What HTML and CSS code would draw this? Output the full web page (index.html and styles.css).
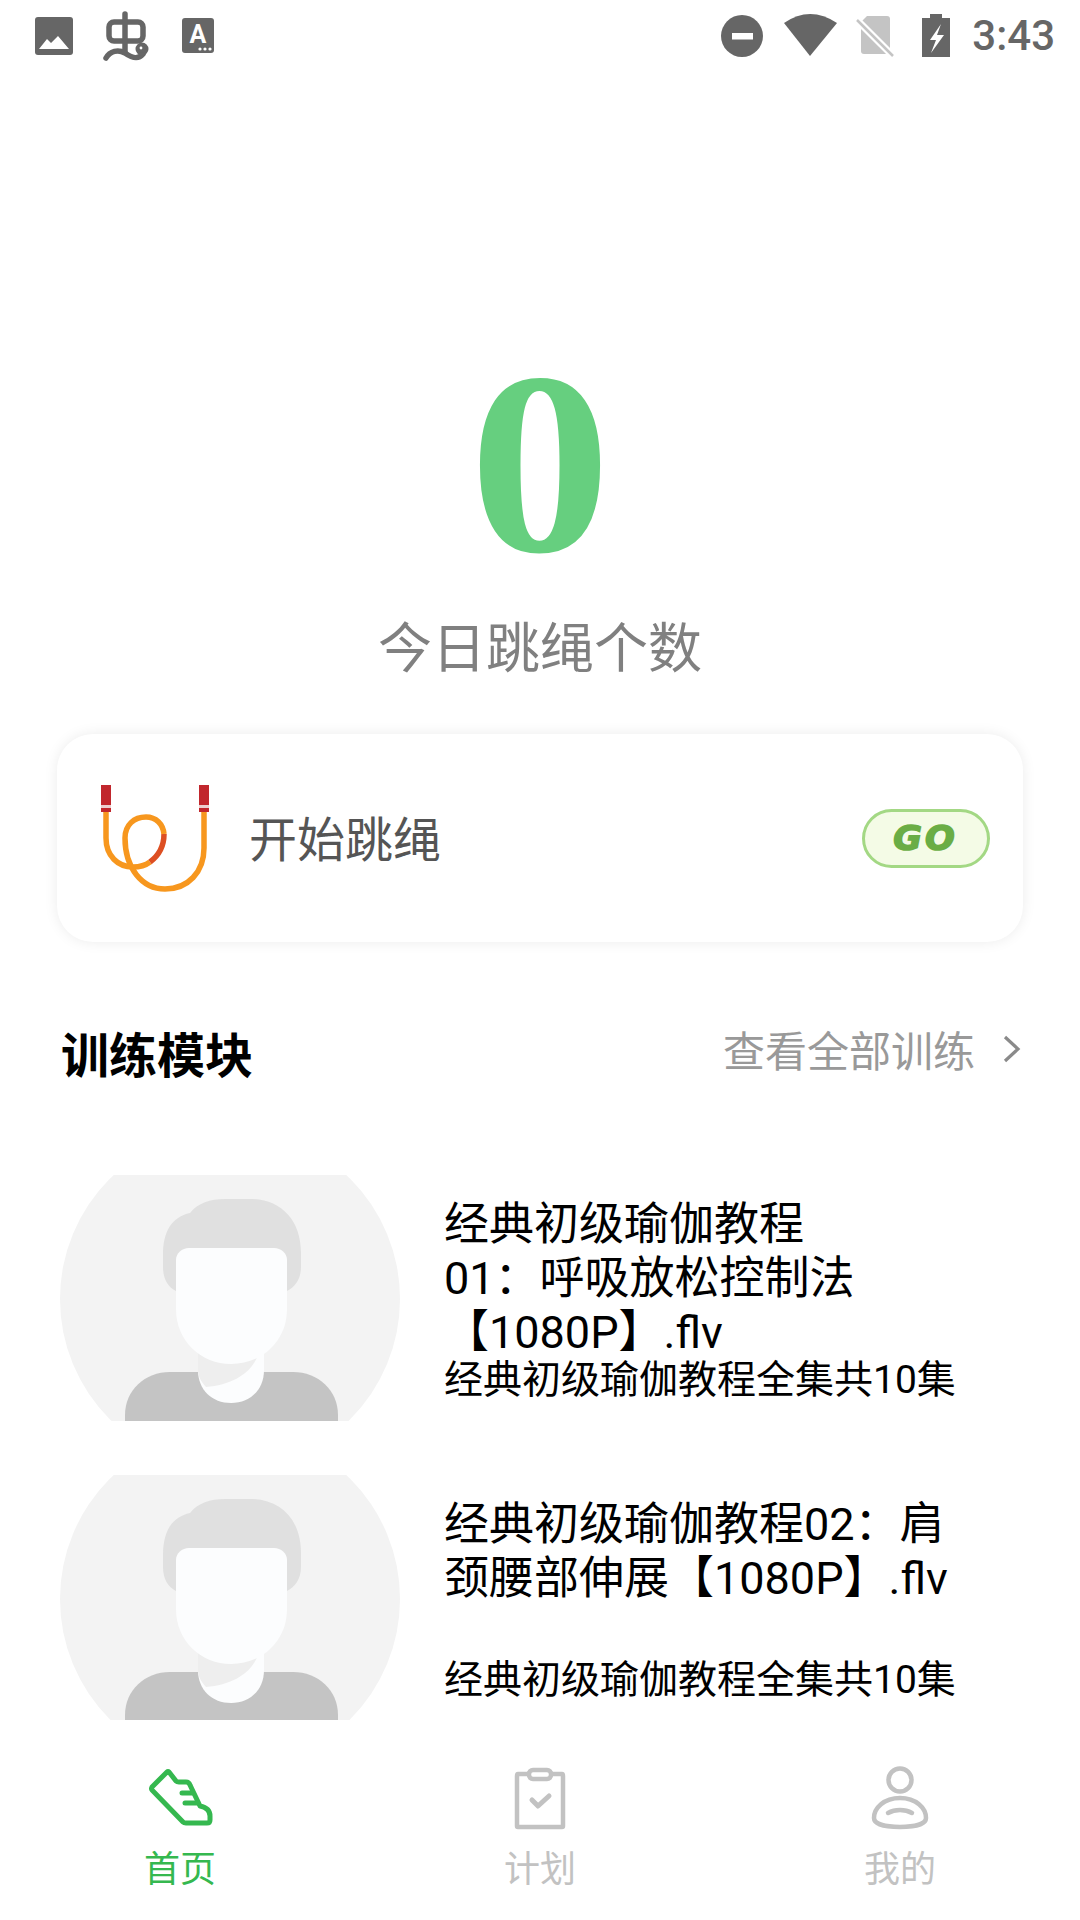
FILE: index.html
```html
<!DOCTYPE html>
<html lang="zh-CN">
<head>
    <meta charset="UTF-8">
    <meta name="viewport" content="width=device-width, initial-scale=1.0">
    <title>跳绳</title>
    <link rel="stylesheet" href="styles.css">
</head>
<body>
    <div class="container">
        <!-- Status Bar -->
        <div class="status-bar">
            <div class="status-left">
                <svg class="st-image" viewBox="35 17 38 38"><rect x="35" y="17" width="38" height="38" rx="3" fill="#666"/><path d="M39 49 L47 39 L51 43 L58 36 L69 49 Z" fill="#fff"/></svg>
                <svg class="st-bug" viewBox="100 9 52 54" fill="none" stroke="#666" stroke-width="5.5" stroke-linecap="round" stroke-linejoin="round"><rect x="109" y="22" width="34" height="19" rx="5"/><path d="M125 14 V52"/><path d="M106 58 C110 51 118 49 125 53 C132 58 138 60 143 54"/><circle cx="142" cy="49" r="5" fill="#666" stroke-width="3"/><circle cx="141" cy="48" r="1.4" fill="#fff" stroke="none"/></svg>
                <svg class="st-a" viewBox="182 18 32 36"><rect x="182" y="18" width="32" height="35" rx="3" fill="#666"/><text x="198" y="43" class="st-a-text">A</text><circle cx="200" cy="49" r="1.6" fill="#fff"/><circle cx="205" cy="49" r="1.6" fill="#fff"/><circle cx="210" cy="49" r="1.6" fill="#fff"/></svg>
            </div>
            <div class="status-right">
                <svg class="st-dnd" viewBox="722 15 42 42"><circle cx="743" cy="36" r="21" fill="#666"/><rect x="733" y="33" width="21" height="6.5" fill="#fff"/></svg>
                <svg class="st-wifi" viewBox="785 14 53 42"><path d="M785 23 Q811 5 838 23 L811 56 Z" fill="#666"/></svg>
                <svg class="st-sim" viewBox="857 15 39 43"><path d="M868 16 H888 Q891 16 891 19 V51 Q891 54 888 54 H865 Q862 54 862 51 V22 Z" fill="#c4c4c4"/><path d="M857 19 L895 57" stroke="#fff" stroke-width="7"/><path d="M858 20 L894 56" stroke="#c4c4c4" stroke-width="2.5"/></svg>
                <svg class="st-battery" viewBox="923 14 28 43"><path d="M931 14 H943 V18 H951 V57 H923 V18 H931 Z" fill="#666"/><path d="M942 24 L931 40 H937 L932 53 L945 35 H938 Z" fill="#fff"/></svg>
                <span class="time">3:43</span>
            </div>
        </div>

        <div class="main-content">
            <!-- Today count -->
            <div class="today">
                <div class="today-num">0</div>
                <div class="today-label">今日跳绳个数</div>
            </div>

            <!-- Start card -->
            <div class="start-card">
                <svg class="rope" viewBox="96 780 120 120" fill="none" stroke-width="5.5">
                    <path d="M106 812 V838 C106 856 118 867 133 867 C140 867 146 865 150 862" stroke="#f7971e"/>
                    <path d="M150 862 C158 856 164 846 164 834" stroke="#dd4f22"/>
                    <path d="M164 834 C163 824 156 817 146 817 C134 817 125 825 125 838 C125 868 142 889 165 889 C188 889 204 872 204 848 V812" stroke="#f7971e"/>
                    <rect x="101" y="785" width="10" height="27" fill="#c1272d" stroke="none"/>
                    <rect x="199" y="785" width="10" height="27" fill="#c1272d" stroke="none"/>
                    <rect x="101" y="805" width="10" height="3" fill="#eccfcf" stroke="none"/>
                    <rect x="199" y="805" width="10" height="3" fill="#eccfcf" stroke="none"/>
                </svg>
                <span class="start-text">开始跳绳</span>
                <div class="go-btn"><span>GO</span></div>
            </div>

            <!-- Training list -->
            <div class="section-head">
                <h3>训练模块</h3>
                <div class="see-all">
                    <span>查看全部训练</span>
                    <svg class="chevron" viewBox="0 0 20 30" fill="none" stroke="#8a8a8a" stroke-width="3.2"><path d="M3 3 L16 15 L3 27"/></svg>
                </div>
            </div>

            <div class="video-item">
                <svg class="thumb" viewBox="0 0 340 246">
                    <circle cx="170" cy="124" r="170" fill="#f3f3f3"/>
                    <path d="M103 80 C103 56 112 42 130 38 C138 28 150 24 165 24 H190 C220 24 241 44 241 78 V92 C241 104 235 112 227 116 H116 C108 112 103 104 103 92 Z" fill="#e0e0e0"/>
                    <path d="M65 246 V240 C65 215 85 197 110 197 H233 C258 197 278 215 278 240 V246 Z" fill="#c4c4c4"/>
                    <path d="M138 170 H204 V195 C204 215 190 228 171 228 C152 228 138 215 138 195 Z" fill="#fcfdfe"/>
                    <path d="M138 170 H200 C198 195 175 210 146 212 C141 207 138 201 138 195 Z" fill="#eeeeee"/>
                    <path d="M116 85 C116 78 122 73 129 73 H214 C221 73 227 78 227 85 V134 C227 166 202 189 171 189 C141 189 116 166 116 134 Z" fill="#fcfdfe"/>
                </svg>
                <div class="video-text">
                    <div class="video-title">经典初级瑜伽教程<br>01：呼吸放松控制法<br>【1080P】.flv</div>
                    <div class="video-sub">经典初级瑜伽教程全集共10集</div>
                </div>
            </div>

            <div class="video-item">
                <svg class="thumb" viewBox="0 0 340 246">
                    <circle cx="170" cy="124" r="170" fill="#f3f3f3"/>
                    <path d="M103 80 C103 56 112 42 130 38 C138 28 150 24 165 24 H190 C220 24 241 44 241 78 V92 C241 104 235 112 227 116 H116 C108 112 103 104 103 92 Z" fill="#e0e0e0"/>
                    <path d="M65 246 V240 C65 215 85 197 110 197 H233 C258 197 278 215 278 240 V246 Z" fill="#c4c4c4"/>
                    <path d="M138 170 H204 V195 C204 215 190 228 171 228 C152 228 138 215 138 195 Z" fill="#fcfdfe"/>
                    <path d="M138 170 H200 C198 195 175 210 146 212 C141 207 138 201 138 195 Z" fill="#eeeeee"/>
                    <path d="M116 85 C116 78 122 73 129 73 H214 C221 73 227 78 227 85 V134 C227 166 202 189 171 189 C141 189 116 166 116 134 Z" fill="#fcfdfe"/>
                </svg>
                <div class="video-text">
                    <div class="video-title">经典初级瑜伽教程02：肩颈腰部伸展【1080P】.flv</div>
                    <div class="video-sub">经典初级瑜伽教程全集共10集</div>
                </div>
            </div>
        </div>

        <!-- Bottom tabs -->
        <div class="tab-bar">
            <div class="tab active">
                <svg class="tab-icon" viewBox="140 1764 80 66" fill="none" stroke="#35b84f" stroke-width="5" stroke-linecap="round" stroke-linejoin="round">
                    <path d="M167 1772 L152 1787 Q151 1789 152 1790 L183 1822 Q184 1823 186 1823 H207 Q210 1823 210 1820 V1816 Q210 1808 200 1806 L190 1785 Q189 1782 186 1782 H179 Q177 1782 176 1781 L169 1772 Q168 1771 167 1772 Z"/>
                    <path d="M182 1793 H192"/>
                    <path d="M185 1803 H198"/>
                </svg>
                <span>首页</span>
            </div>
            <div class="tab">
                <svg class="tab-icon" viewBox="500 1764 80 66" fill="none" stroke="#c2c2c2" stroke-width="4.5" stroke-linecap="round" stroke-linejoin="round">
                    <path d="M528 1774 H518 Q517 1774 517 1776 V1826 Q517 1827 518 1827 H562 Q563 1827 563 1826 V1776 Q563 1774 562 1774 H552"/>
                    <rect x="529" y="1770" width="22" height="9" rx="4"/>
                    <path d="M532 1800 L538 1806 L549 1796" stroke-width="5"/>
                </svg>
                <span>计划</span>
            </div>
            <div class="tab">
                <svg class="tab-icon" viewBox="860 1764 80 66" fill="none" stroke="#c2c2c2" stroke-width="4.5" stroke-linecap="round">
                    <circle cx="900" cy="1780" r="11.5"/>
                    <path d="M900 1798 C884 1798 874 1808 874 1818 C874 1824 885 1827 900 1827 C915 1827 926 1824 926 1818 C926 1808 916 1798 900 1798 Z"/>
                    <path d="M888 1813 C895 1809 905 1809 912 1813"/>
                </svg>
                <span>我的</span>
            </div>
        </div>
    </div>
</body>
</html>
```

FILE: styles.css
```css
* {
    margin: 0;
    padding: 0;
    box-sizing: border-box;
}

body {
    font-family: Roboto, 'Noto Sans CJK SC', sans-serif;
    background: white;
}

.container {
    width: 1080px;
    height: 1920px;
    display: flex;
    flex-direction: column;
    overflow: hidden;
}

/* Status Bar */
.status-bar {
    height: 72px;
    flex-shrink: 0;
    display: flex;
    justify-content: space-between;
    padding: 0 25px 0 35px;
}

.status-left,
.status-right {
    display: flex;
    align-items: flex-start;
}

.status-left svg,
.status-right svg {
    display: block;
}

.st-image {
    width: 38px;
    height: 38px;
    margin-top: 17px;
}

.st-bug {
    width: 52px;
    height: 54px;
    margin: 9px 0 0 27px;
}

.st-a {
    width: 32px;
    height: 36px;
    margin: 18px 0 0 30px;
}

.st-a-text {
    font-family: Roboto, sans-serif;
    font-size: 25px;
    font-weight: bold;
    fill: #fff;
    text-anchor: middle;
}

.st-dnd {
    width: 42px;
    height: 42px;
    margin-top: 15px;
}

.st-wifi {
    width: 53px;
    height: 42px;
    margin: 14px 0 0 21px;
}

.st-sim {
    width: 39px;
    height: 43px;
    margin: 15px 0 0 19px;
}

.st-battery {
    width: 28px;
    height: 43px;
    margin: 14px 0 0 27px;
}

.time {
    font-size: 42px;
    font-weight: 500;
    line-height: 72px;
    color: #666;
    margin-left: 22px;
}

.main-content {
    flex: 1;
    overflow: hidden;
    padding: 0 57px;
}

/* Today count */
.today {
    text-align: center;
    padding-top: 262px;
}

.today-num {
    font-family: 'Liberation Serif', serif;
    font-size: 260px;
    font-weight: bold;
    line-height: 258px;
    color: #66cf7f;
    transform: scaleX(1.09);
}

.today-label {
    font-size: 54px;
    line-height: 72px;
    color: #808080;
    margin-top: 22px;
}

/* Start card */
.start-card {
    height: 208px;
    margin-top: 48px;
    background: white;
    border-radius: 36px;
    box-shadow: 0 0 14px rgba(0,0,0,0.08);
    display: flex;
    align-items: center;
    padding: 0 33px 0 39px;
}

.rope {
    width: 120px;
    height: 120px;
    flex-shrink: 0;
    margin-top: 4px;
}

.start-text {
    font-size: 48px;
    color: #555;
    margin: 0 0 4px 33px;
    flex: 1;
}

.go-btn {
    width: 128px;
    height: 59px;
    background: #f4fbe6;
    border: 3px solid #a3d884;
    border-radius: 30px;
    display: flex;
    align-items: center;
    justify-content: center;
}

.go-btn span {
    font-family: 'DejaVu Sans', sans-serif;
    font-size: 33px;
    font-weight: bold;
    font-style: italic;
    letter-spacing: 3px;
    color: #6aad45;
    -webkit-text-stroke: 1.5px #6aad45;
    transform: scaleX(1.06);
}

/* Training list */
.section-head {
    display: flex;
    justify-content: space-between;
    align-items: center;
    margin: 75px 1px 88px 0;
    padding: 0 0 0 4px;
}

.section-head h3 {
    font-size: 48px;
    font-weight: bold;
    color: #000;
}

.see-all {
    display: flex;
    align-items: center;
    font-size: 42px;
    color: #999;
    margin-bottom: 7px;
}

.chevron {
    width: 20px;
    height: 30px;
    margin: 0 0 0 27px;
}

.video-item {
    display: flex;
    margin-top: 54px;
    margin-left: 3px;
}

.thumb {
    width: 340px;
    height: 246px;
    flex-shrink: 0;
    display: block;
}

.video-text {
    width: 520px;
    margin-left: 44px;
    padding: 23px 0 22px;
    display: flex;
    flex-direction: column;
    justify-content: space-between;
}

.video-title {
    font-size: 45px;
    line-height: 54px;
    color: #000;
}

.video-sub {
    font-size: 39px;
    line-height: 38px;
    color: #000;
}

/* Bottom tabs */
.tab-bar {
    height: 200px;
    flex-shrink: 0;
    display: flex;
    background: white;
}

.tab {
    flex: 1;
    display: flex;
    flex-direction: column;
    align-items: center;
    padding-top: 44px;
    font-size: 36px;
    line-height: 50px;
    color: #c2c2c2;
}

.tab span {
    margin-top: 15px;
}

.tab.active {
    color: #35b84f;
}

.tab-icon {
    width: 80px;
    height: 66px;
    display: block;
}
```
